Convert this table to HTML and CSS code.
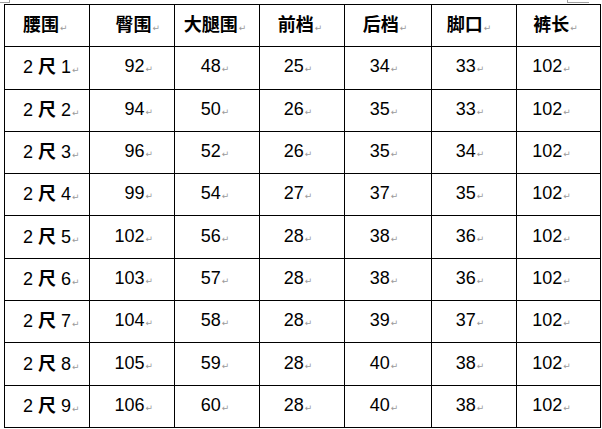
FILE: index.html
```html
<!DOCTYPE html>
<html lang="zh">
<head>
<meta charset="utf-8">
<title>尺码表</title>
<link rel="stylesheet" href="styles.css">
</head>
<body>
<div class="page">
  <div class="mark-tl"></div>
  <div class="mark-tr"></div>
  <table class="size-table">
    <colgroup>
      <col class="w85"><col class="w85"><col class="w85"><col class="w85"><col class="w87"><col class="w85"><col class="w84">
    </colgroup>
    <thead>
      <tr>
        <th class="c1">腰围<span class="pm">↵</span></th>
        <th class="c2">臀围<span class="pm">↵</span></th>
        <th class="c3">大腿围<span class="pm">↵</span></th>
        <th class="c4">前档<span class="pm">↵</span></th>
        <th class="c5">后档<span class="pm">↵</span></th>
        <th class="c6">脚口<span class="pm">↵</span></th>
        <th class="c7">裤长<span class="pm">↵</span></th>
      </tr>
    </thead>
    <tbody>
      <tr><td class="c1">2 <b class="cn">尺</b> 1<span class="pm">↵</span></td><td class="c2">92<span class="pm">↵</span></td><td class="c3">48<span class="pm">↵</span></td><td class="c4">25<span class="pm">↵</span></td><td class="c5">34<span class="pm">↵</span></td><td class="c6">33<span class="pm">↵</span></td><td class="c7">102<span class="pm">↵</span></td></tr>
      <tr><td class="c1">2 <b class="cn">尺</b> 2<span class="pm">↵</span></td><td class="c2">94<span class="pm">↵</span></td><td class="c3">50<span class="pm">↵</span></td><td class="c4">26<span class="pm">↵</span></td><td class="c5">35<span class="pm">↵</span></td><td class="c6">33<span class="pm">↵</span></td><td class="c7">102<span class="pm">↵</span></td></tr>
      <tr><td class="c1">2 <b class="cn">尺</b> 3<span class="pm">↵</span></td><td class="c2">96<span class="pm">↵</span></td><td class="c3">52<span class="pm">↵</span></td><td class="c4">26<span class="pm">↵</span></td><td class="c5">35<span class="pm">↵</span></td><td class="c6">34<span class="pm">↵</span></td><td class="c7">102<span class="pm">↵</span></td></tr>
      <tr><td class="c1">2 <b class="cn">尺</b> 4<span class="pm">↵</span></td><td class="c2">99<span class="pm">↵</span></td><td class="c3">54<span class="pm">↵</span></td><td class="c4">27<span class="pm">↵</span></td><td class="c5">37<span class="pm">↵</span></td><td class="c6">35<span class="pm">↵</span></td><td class="c7">102<span class="pm">↵</span></td></tr>
      <tr><td class="c1">2 <b class="cn">尺</b> 5<span class="pm">↵</span></td><td class="c2">102<span class="pm">↵</span></td><td class="c3">56<span class="pm">↵</span></td><td class="c4">28<span class="pm">↵</span></td><td class="c5">38<span class="pm">↵</span></td><td class="c6">36<span class="pm">↵</span></td><td class="c7">102<span class="pm">↵</span></td></tr>
      <tr><td class="c1">2 <b class="cn">尺</b> 6<span class="pm">↵</span></td><td class="c2">103<span class="pm">↵</span></td><td class="c3">57<span class="pm">↵</span></td><td class="c4">28<span class="pm">↵</span></td><td class="c5">38<span class="pm">↵</span></td><td class="c6">36<span class="pm">↵</span></td><td class="c7">102<span class="pm">↵</span></td></tr>
      <tr><td class="c1">2 <b class="cn">尺</b> 7<span class="pm">↵</span></td><td class="c2">104<span class="pm">↵</span></td><td class="c3">58<span class="pm">↵</span></td><td class="c4">28<span class="pm">↵</span></td><td class="c5">39<span class="pm">↵</span></td><td class="c6">37<span class="pm">↵</span></td><td class="c7">102<span class="pm">↵</span></td></tr>
      <tr><td class="c1">2 <b class="cn">尺</b> 8<span class="pm">↵</span></td><td class="c2">105<span class="pm">↵</span></td><td class="c3">59<span class="pm">↵</span></td><td class="c4">28<span class="pm">↵</span></td><td class="c5">40<span class="pm">↵</span></td><td class="c6">38<span class="pm">↵</span></td><td class="c7">102<span class="pm">↵</span></td></tr>
      <tr><td class="c1">2 <b class="cn">尺</b> 9<span class="pm">↵</span></td><td class="c2">106<span class="pm">↵</span></td><td class="c3">60<span class="pm">↵</span></td><td class="c4">28<span class="pm">↵</span></td><td class="c5">40<span class="pm">↵</span></td><td class="c6">38<span class="pm">↵</span></td><td class="c7">102<span class="pm">↵</span></td></tr>
    </tbody>
  </table>
</div>
</body>
</html>
```

FILE: styles.css
```css
html, body {
  margin: 0;
  padding: 0;
  background: #ffffff;
}

.page {
  position: relative;
  width: 602px;
  height: 429px;
  overflow: hidden;
  padding: 4px 0 0 4px;
  box-sizing: border-box;
}

.mark-tl {
  position: absolute;
  left: 0;
  top: 0;
  width: 10px;
  height: 3px;
  border-right: 1px solid #a0a0a0;
  border-bottom: 1px solid #a0a0a0;
  box-sizing: border-box;
}

.mark-tr {
  position: absolute;
  left: 567px;
  top: 0;
  width: 22px;
  height: 3px;
  border-left: 1px solid #a0a0a0;
  border-bottom: 1px solid #a0a0a0;
  box-sizing: border-box;
}

.size-table {
  border-collapse: collapse;
  table-layout: fixed;
  width: 596px;
  height: 423px;
  font-family: "Liberation Sans", "Noto Sans CJK SC", sans-serif;
  font-size: 18px;
  color: #000;
}

.w85 { width: 85px; }
.w87 { width: 87px; }
.w84 { width: 84px; }

.size-table th,
.size-table td {
  border: 1px solid #000;
  padding: 0;
  vertical-align: middle;
  white-space: nowrap;
  line-height: 20px;
}

.size-table tr {
  height: 42.3px;
}

.size-table th {
  font-family: "Noto Sans CJK SC", sans-serif;
  font-weight: 700;
  font-size: 18px;
}

.cn {
  font-family: "Noto Sans CJK SC", sans-serif;
  font-weight: 700;
  font-size: 18px;
}

.pm {
  font-family: "DejaVu Sans", sans-serif;
  font-weight: 400;
  font-size: 9px;
  color: #9a9a9a;
  margin-left: 1px;
}

.c1 { text-align: left; padding-left: 18px !important; }
th.c2 { text-align: right; padding-right: 14px !important; }
td.c2 { text-align: right; padding-right: 21px !important; }
.c3 { text-align: center; padding-right: 4px !important; }
th.c4 { text-align: center; padding-right: 4px !important; }
td.c4 { text-align: center; padding-right: 8px !important; }
th.c5 { text-align: center; padding-right: 6px !important; }
td.c5 { text-align: center; padding-right: 8px !important; }
th.c6 { text-align: center; padding-right: 10px !important; }
td.c6 { text-align: center; padding-right: 8px !important; }
th.c7 { text-align: center; padding-right: 6px !important; }
td.c7 { text-align: center; padding-right: 14px !important; }
```
